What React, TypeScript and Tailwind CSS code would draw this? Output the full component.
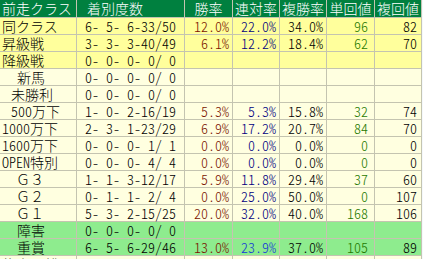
import React from 'react';

type Row = {
  name: string;
  indent: string;
  record: string;
  win: string;
  rentai: string;
  fukusho: string;
  tan: string;
  fuku: string;
  bg: string;
  wide?: boolean;
  rentaiColor?: string;
};

const YELLOW = 'bg-[#ffff9c]';
const CREAM = 'bg-[#ffffe0]';
const GREEN = 'bg-[#8eec8e]';

const rows: Row[] = [
  { name: '同クラス', indent: 'pl-[2px]', record: '6- 5- 6-33/50', win: '12.0%', rentai: '22.0%', fukusho: '34.0%', tan: '96', fuku: '82', bg: YELLOW },
  { name: '昇級戦', indent: 'pl-[2px]', record: '3- 3- 3-40/49', win: '6.1%', rentai: '12.2%', fukusho: '18.4%', tan: '62', fuku: '70', bg: YELLOW },
  { name: '降級戦', indent: 'pl-[2px]', record: '0- 0- 0- 0/ 0', win: '', rentai: '', fukusho: '', tan: '', fuku: '', bg: YELLOW },
  { name: '新馬', indent: 'pl-[17px]', record: '0- 0- 0- 0/ 0', win: '', rentai: '', fukusho: '', tan: '', fuku: '', bg: CREAM },
  { name: '未勝利', indent: 'pl-[11px]', record: '0- 0- 0- 0/ 0', win: '', rentai: '', fukusho: '', tan: '', fuku: '', bg: CREAM },
  { name: '500万下', indent: 'pl-[11px]', record: '1- 0- 2-16/19', win: '5.3%', rentai: '5.3%', fukusho: '15.8%', tan: '32', fuku: '74', bg: CREAM },
  { name: '1000万下', indent: 'pl-[2px]', record: '2- 3- 1-23/29', win: '6.9%', rentai: '17.2%', fukusho: '20.7%', tan: '84', fuku: '70', bg: CREAM },
  { name: '1600万下', indent: 'pl-[2px]', record: '0- 0- 0- 1/ 1', win: '0.0%', rentai: '0.0%', fukusho: '0.0%', tan: '0', fuku: '0', bg: CREAM },
  { name: 'OPEN特別', indent: 'pl-[2px]', record: '0- 0- 0- 4/ 4', win: '0.0%', rentai: '0.0%', fukusho: '0.0%', tan: '0', fuku: '0', bg: CREAM },
  { name: 'Ｇ３', indent: 'pl-[16px]', record: '1- 1- 3-12/17', win: '5.9%', rentai: '11.8%', fukusho: '29.4%', tan: '37', fuku: '60', bg: CREAM, wide: true },
  { name: 'Ｇ２', indent: 'pl-[16px]', record: '0- 1- 1- 2/ 4', win: '0.0%', rentai: '25.0%', fukusho: '50.0%', tan: '0', fuku: '107', bg: CREAM, wide: true },
  { name: 'Ｇ１', indent: 'pl-[16px]', record: '5- 3- 2-15/25', win: '20.0%', rentai: '32.0%', fukusho: '40.0%', tan: '168', fuku: '106', bg: CREAM, wide: true },
  { name: '障害', indent: 'pl-[17px]', record: '0- 0- 0- 0/ 0', win: '', rentai: '', fukusho: '', tan: '', fuku: '', bg: GREEN },
  { name: '重賞', indent: 'pl-[17px]', record: '6- 5- 6-29/46', win: '13.0%', rentai: '23.9%', fukusho: '37.0%', tan: '105', fuku: '89', bg: GREEN, rentaiColor: 'text-[#1438d8]' },
  { name: '後方距離', indent: 'pl-[2px]', record: '', win: '', rentai: '', fukusho: '', tan: '', fuku: '', bg: CREAM },
];

const headers = ['前走クラス', '着別度数', '勝率', '連対率', '複勝率', '単回値', '複回値'];

export default function App() {
  return (
    <div className="h-[259px] w-[423px] overflow-hidden bg-[#f4f8fc] font-['Noto_Sans_CJK_JP',sans-serif] text-[14px] font-light leading-[16px] text-black [font-feature-settings:'hwid']">
      <div className="grid w-[422px] grid-cols-[76px_107px_47px_46px_46px_47px_46px] gap-px border-r border-[#c4c4b0] bg-[#c4c4b0]">
        {headers.map((h, i) => (
          <div
            key={h}
            className={`h-[17px] whitespace-nowrap bg-[#00803f] text-[14px] leading-[17px] text-white ${
              i === 0 ? 'pl-[2px]' : i === 1 ? 'pl-[10px]' : 'text-center'
            }`}
          >
            {h}
          </div>
        ))}
        {rows.map((r) => (
          <React.Fragment key={r.name}>
            <div
              className={`h-[16px] whitespace-pre ${r.bg} ${r.indent} ${
                r.wide ? '[font-feature-settings:normal]' : ''
              }`}
            >
              {r.name}
            </div>
            <div className={`h-[16px] whitespace-pre pl-[8px] ${r.bg}`}>{r.record}</div>
            <div className={`h-[16px] pr-[3px] text-right text-[#7a1400] ${r.bg}`}>{r.win}</div>
            <div className={`h-[16px] pr-[3px] text-right ${r.rentaiColor ?? 'text-[#000080]'} ${r.bg}`}>{r.rentai}</div>
            <div className={`h-[16px] pr-[3px] text-right ${r.bg}`}>{r.fukusho}</div>
            <div className={`h-[16px] pr-[6px] text-right text-[#1f7a00] ${r.bg}`}>{r.tan}</div>
            <div className={`h-[16px] pr-[4px] text-right ${r.bg}`}>{r.fuku}</div>
          </React.Fragment>
        ))}
      </div>
    </div>
  );
}
